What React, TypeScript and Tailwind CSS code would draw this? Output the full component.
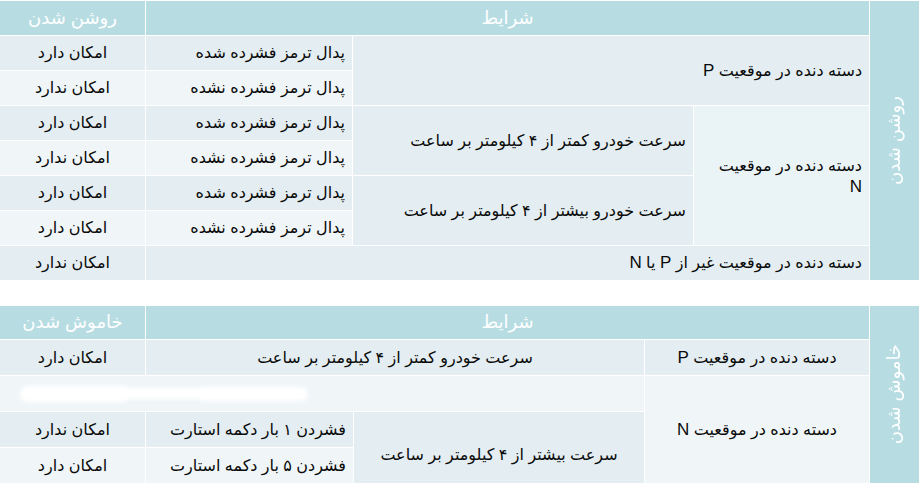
import React from 'react';

const DARK = 'bg-[#e4eef2]';
const LIGHT = 'bg-[#f0f6f8]';

function Cell({
  className = '',
  children,
}: {
  className?: string;
  children?: React.ReactNode;
}) {
  return (
    <div className={`flex items-center px-[7px] text-[#0a0a0a] ${className}`}>{children}</div>
  );
}

function SideLabel({ text, span }: { text: string; span: string }) {
  return (
    <div className={`${span} col-start-1 flex items-center justify-center bg-[#b7dde3]`}>
      <span className="rotate-180 text-[18px] text-white [writing-mode:vertical-rl]">{text}</span>
    </div>
  );
}

function Head({ text, className = '' }: { text: string; className?: string }) {
  return (
    <div className={`flex items-center justify-center bg-[#b7dde3] text-[18px] text-white ${className}`}>
      {text}
    </div>
  );
}

function TurnOnTable() {
  return (
    <div
      dir="rtl"
      className="mt-[1px] grid grid-cols-[49px_175px_340px_206px_145px] grid-rows-[34px_repeat(7,34px)] gap-[1px]"
    >
      <SideLabel text="روشن شدن" span="row-span-8" />
      <Head text="شرایط" className="col-span-3" />
      <Head text="روشن شدن" />

      {/* P */}
      <Cell className={`col-span-2 row-span-2 ${DARK}`}>
        <span>
          دسته دنده در موقعیت <span className="text-[17px]">P</span>
        </span>
      </Cell>
      <Cell className={DARK}>پدال ترمز فشرده شده</Cell>
      <Cell className={`justify-center ${DARK}`}>امکان دارد</Cell>
      <Cell className={LIGHT}>پدال ترمز فشرده نشده</Cell>
      <Cell className={`justify-center ${LIGHT}`}>امکان ندارد</Cell>

      {/* N */}
      <Cell className="col-start-2 row-span-4 bg-[#eaf3f6] leading-[21px]">
        <span>
          دسته دنده در موقعیت
          <br />
          <span className="text-[17px]">N</span>
        </span>
      </Cell>
      <Cell className={`row-span-2 ${DARK}`}>سرعت خودرو کمتر از ۴ کیلومتر بر ساعت</Cell>
      <Cell className={DARK}>پدال ترمز فشرده شده</Cell>
      <Cell className={`justify-center ${DARK}`}>امکان دارد</Cell>
      <Cell className={`col-start-4 ${LIGHT}`}>پدال ترمز فشرده نشده</Cell>
      <Cell className={`justify-center ${LIGHT}`}>امکان ندارد</Cell>
      <Cell className={`col-start-3 row-span-2 ${DARK}`}>سرعت خودرو بیشتر از ۴ کیلومتر بر ساعت</Cell>
      <Cell className={DARK}>پدال ترمز فشرده شده</Cell>
      <Cell className={`justify-center ${DARK}`}>امکان دارد</Cell>
      <Cell className={`col-start-4 ${LIGHT}`}>پدال ترمز فشرده نشده</Cell>
      <Cell className={`justify-center ${LIGHT}`}>امکان دارد</Cell>

      {/* other */}
      <Cell className={`col-start-2 col-span-3 ${DARK}`}>
        <span>
          دسته دنده در موقعیت غیر از <span className="text-[17px]">P</span> یا{' '}
          <span className="text-[17px]">N</span>
        </span>
      </Cell>
      <Cell className={`justify-center ${DARK}`}>امکان ندارد</Cell>
    </div>
  );
}

function TurnOffTable() {
  return (
    <div
      dir="rtl"
      className="mt-[26px] grid grid-cols-[49px_224px_290px_207px_145px] grid-rows-[33px_repeat(4,35px)] gap-[1px]"
    >
      <SideLabel text="خاموش شدن" span="row-span-5" />
      <Head text="شرایط" className="col-span-3" />
      <Head text="خاموش شدن" />

      <Cell className={`justify-center ${DARK}`}>
        <span>
          دسته دنده در موقعیت <span className="text-[17px]">P</span>
        </span>
      </Cell>
      <Cell className={`col-span-2 justify-center ${DARK}`}>سرعت خودرو کمتر از ۴ کیلومتر بر ساعت</Cell>
      <Cell className={`justify-center ${DARK}`}>امکان دارد</Cell>

      <Cell className={`col-start-2 row-span-3 justify-center ${LIGHT}`}>
        <span>
          دسته دنده در موقعیت <span className="text-[17px]">N</span>
        </span>
      </Cell>
      <div className={`col-span-3 flex items-center justify-end pl-[20px] ${LIGHT}`}>
        {/* erased text */}
        <div className="flex items-center" dir="ltr">
          <div className="h-[16px] w-[110px] rounded-full bg-white blur-[2px]" />
          <div className="-ml-[12px] h-[11px] w-[90px] rounded-full bg-white blur-[2px]" />
          <div className="-ml-[10px] h-[14px] w-[110px] rounded-full bg-white blur-[2px]" />
        </div>
      </div>

      <Cell className={`col-start-3 row-span-2 justify-center pt-[14px] ${DARK}`}>
        سرعت بیشتر از ۴ کیلومتر بر ساعت
      </Cell>
      <Cell className={DARK}>فشردن ۱ بار دکمه استارت</Cell>
      <Cell className={`justify-center ${DARK}`}>امکان ندارد</Cell>
      <Cell className={`col-start-4 ${LIGHT}`}>فشردن ۵ بار دکمه استارت</Cell>
      <Cell className={`justify-center ${LIGHT}`}>امکان دارد</Cell>
    </div>
  );
}

export default function App() {
  return (
    <div
      className="h-[483px] w-[921px] overflow-hidden bg-white pr-[2px] text-[16px]"
      style={{ fontFamily: '"Liberation Sans", "DejaVu Sans", sans-serif' }}
    >
      <TurnOnTable />
      <TurnOffTable />
    </div>
  );
}
